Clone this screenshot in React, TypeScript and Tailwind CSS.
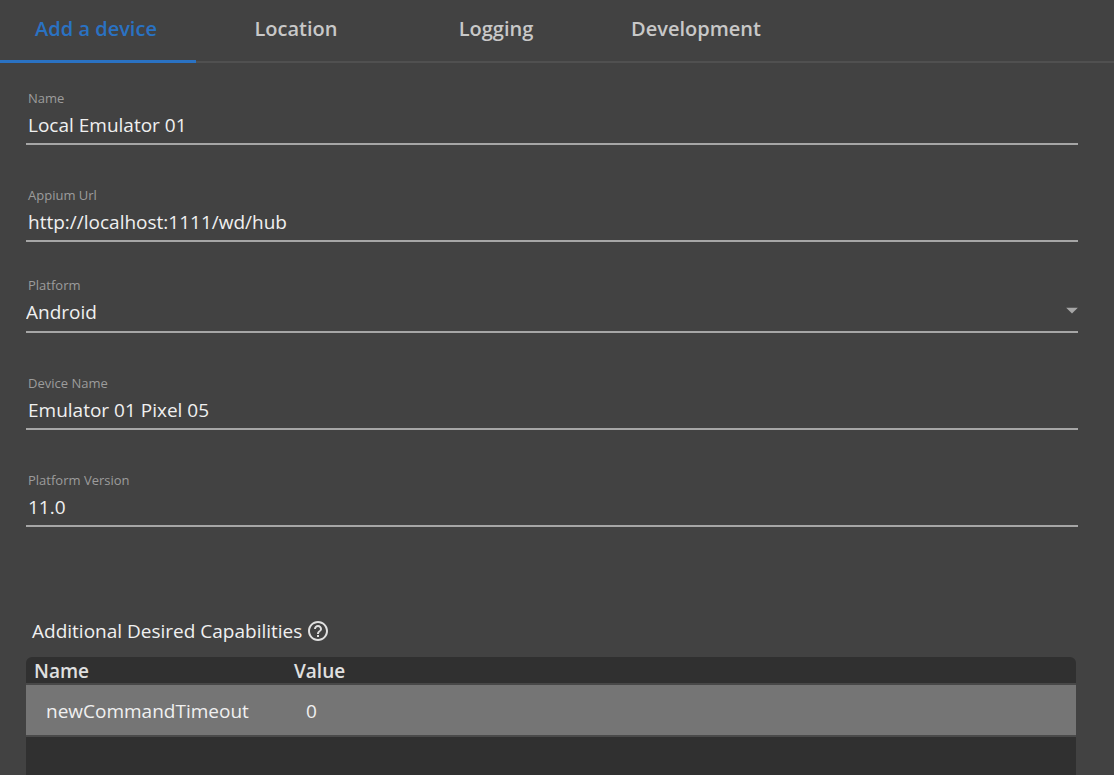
import { useState } from 'react';
import { MdHelpOutline, MdArrowDropDown } from 'react-icons/md';

const TABS = ['Add a device', 'Location', 'Logging', 'Development'];

interface Capability {
  name: string;
  value: string;
}

const capabilities: Capability[] = [{ name: 'newCommandTimeout', value: '0' }];

interface TextFieldProps {
  id: string;
  label: string;
  initialValue: string;
}

function TextField({ id, label, initialValue }: TextFieldProps) {
  const [value, setValue] = useState(initialValue);

  return (
    <div className="flex flex-col">
      <label htmlFor={id} className="px-0.5 text-[13px] leading-5 font-medium text-[#9c9c9c]">{label}</label>
      <input
        id={id}
        type="text"
        value={value}
        onChange={e => setValue(e.target.value)}
        className="h-[37px] w-full border-b-2 border-[#a6a6a6] bg-transparent px-0.5 pb-0.5 text-[19px] text-[#f0f0f0] outline-none"
      />
    </div>
  );
}

function PlatformSelect() {
  const [platform, setPlatform] = useState('Android');

  return (
    <div className="flex flex-col">
      <label htmlFor="platform" className="px-0.5 text-[13px] leading-5 font-medium text-[#9c9c9c]">Platform</label>
      <div className="relative">
        <select
          id="platform"
          value={platform}
          onChange={e => setPlatform(e.target.value)}
          className="h-[38px] w-full appearance-none border-b-2 border-[#a6a6a6] bg-transparent pb-0.5 text-[19px] text-[#f0f0f0] outline-none"
        >
          <option>Android</option>
          <option>iOS</option>
        </select>
        <MdArrowDropDown className="pointer-events-none absolute -right-2 top-px size-7 text-[#a6a6a6]" />
      </div>
    </div>
  );
}

export default function App() {
  const [activeTab, setActiveTab] = useState('Add a device');

  return (
    <div className="flex min-h-screen flex-col bg-[#424242] font-['Open_Sans','Noto_Sans',sans-serif] text-[#f0f0f0]">
      <nav role="tablist" className="flex items-start border-b-2 border-[#505050]">
        {TABS.map(tab => (
          <button
            key={tab}
            role="tab"
            aria-selected={activeTab === tab}
            onClick={() => setActiveTab(tab)}
            className={
              activeTab === tab
                ? '-mb-0.5 w-[196px] border-b-3 border-[#2a72c3] pr-1 pt-3.5 pb-4 text-xl leading-[30px] font-semibold text-[#2a72c3]'
                : 'w-[200px] pt-3.5 pb-4 text-xl leading-[30px] font-semibold text-[#c8c8c8]'
            }
          >
            {tab}
          </button>
        ))}
      </nav>

      <main className="flex flex-1 flex-col pl-[26px] pr-9 pt-[25px]">
        <form className="flex flex-col">
          <div className="flex flex-col gap-10">
            <TextField id="name" label="Name" initialValue="Local Emulator 01" />
            <TextField id="appium-url" label="Appium Url" initialValue="http://localhost:1111/wd/hub" />
          </div>
          <div className="mt-[33px] flex flex-col gap-10">
            <PlatformSelect />
            <TextField id="device-name" label="Device Name" initialValue="Emulator 01 Pixel 05" />
            <TextField id="platform-version" label="Platform Version" initialValue="11.0" />
          </div>
        </form>

        <section className="mt-[90px] mr-0.5 flex flex-1 flex-col">
          <div className="flex items-center gap-1 pl-1.5">
            <h2 className="text-[19px] leading-7">Additional Desired Capabilities</h2>
            <button aria-label="Help">
              <MdHelpOutline className="size-6 text-[#e0e0e0]" />
            </button>
          </div>
          <div className="mt-3 flex-1 overflow-hidden rounded-t-md bg-[#303030]">
            <table className="w-full table-fixed text-left text-[19px]">
              <thead>
                <tr className="border-b-2 border-[#484848] leading-6">
                  <th className="w-[260px] pt-0.5 pl-2 font-semibold text-[#e0e0e0]">Name</th>
                  <th className="pt-0.5 pl-2 font-semibold text-[#e0e0e0]">Value</th>
                </tr>
              </thead>
              <tbody>
                {capabilities.map(capability => (
                  <tr key={capability.name} className="h-[52px] border-b-2 border-[#4a4a4a] bg-[#757575]">
                    <td className="pt-0.5 pl-5">{capability.name}</td>
                    <td className="pt-0.5 pl-5">{capability.value}</td>
                  </tr>
                ))}
              </tbody>
            </table>
          </div>
        </section>
      </main>
    </div>
  );
}
